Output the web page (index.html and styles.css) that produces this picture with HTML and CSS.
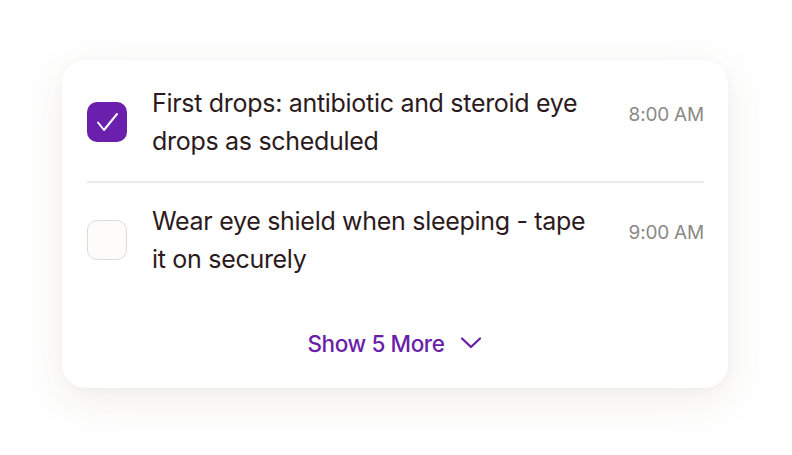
FILE: index.html
```html
<!DOCTYPE html>
<html>
<head>
<meta charset="utf-8">
<link rel="stylesheet" href="styles.css">
</head>
<body>
<div class="card">
  <div class="row first">
    <span class="box checked">
      <svg width="40" height="40" viewBox="0 0 40 40"><path d="M11 20.5 L17 28 L30 12" fill="none" stroke="#fff" stroke-width="2" stroke-linecap="round" stroke-linejoin="round"/></svg>
    </span>
    <div class="text">First drops: antibiotic and steroid eye drops as scheduled</div>
    <div class="time">8:00 AM</div>
  </div>
  <div class="row second">
    <span class="box"></span>
    <div class="text">Wear eye shield when sleeping - tape it on securely</div>
    <div class="time">9:00 AM</div>
  </div>
  <div class="more">
    <span>Show 5 More</span>
    <svg width="22" height="14" viewBox="0 0 22 14"><path d="M2 2.5 L11 11 L20 2.5" fill="none" stroke="#6a1fa8" stroke-width="2.3" stroke-linecap="round" stroke-linejoin="round"/></svg>
  </div>
</div>
</body>
</html>
```
FILE: styles.css
```css
html, body {
  margin: 0;
  padding: 0;
  background: #ffffff;
}
body {
  width: 792px;
  height: 455px;
  overflow: hidden;
  font-family: Inter, "Liberation Sans", sans-serif;
}
.card {
  box-sizing: border-box;
  margin: 60px 0 0 62px;
  width: 666px;
  height: 328px;
  background: #fff;
  border-radius: 24px;
  box-shadow: 0 12px 44px rgba(110, 90, 60, 0.10), 0 2px 10px rgba(110, 90, 60, 0.04);
  padding: 24px 24px 0 25px;
}
.row {
  display: flex;
  align-items: center;
}
.row.first {
  padding-bottom: 21px;
  border-bottom: 2px solid #ecebe8;
}
.row.second {
  padding-top: 19px;
}
.box {
  flex: none;
  box-sizing: border-box;
  width: 40px;
  height: 40px;
  border-radius: 10px;
  background: #fdfcfa;
  border: 1.5px solid #dddbd6;
}
.box.checked {
  background: #6b1fad;
  border: none;
}
.box svg {
  display: block;
}
.text {
  flex: 1;
  margin-left: 25px;
  font-size: 25px;
  line-height: 38px;
  letter-spacing: -0.3px;
  color: #2b1b20;
  padding-right: 30px;
}
.time {
  flex: none;
  align-self: flex-start;
  padding-top: 20px;
  font-size: 19px;
  line-height: 22px;
  color: #8b8987;
  letter-spacing: -0.2px;
}
.more {
  margin-top: 45px;
  height: 40px;
  display: flex;
  align-items: center;
  justify-content: center;
  gap: 15px;
  color: #6a1fa8;
  font-size: 22.5px;
  font-weight: 500;
  letter-spacing: -0.4px;
  padding-right: 2px;
}
.more svg {
  display: block;
}
```
